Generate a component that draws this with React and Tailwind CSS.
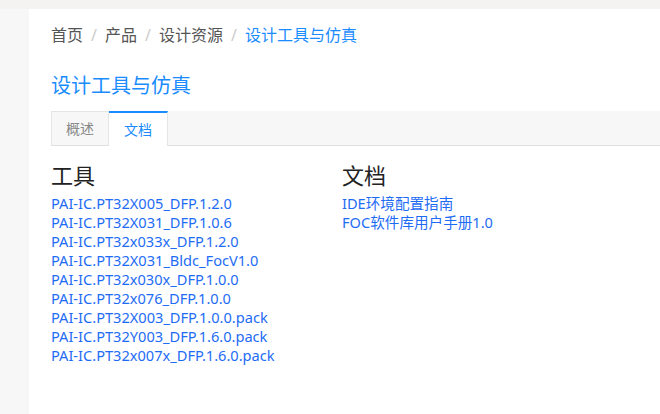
export default function App() {
  const tools = [
    "PAI-IC.PT32X005_DFP.1.2.0",
    "PAI-IC.PT32X031_DFP.1.0.6",
    "PAI-IC.PT32x033x_DFP.1.2.0",
    "PAI-IC.PT32X031_Bldc_FocV1.0",
    "PAI-IC.PT32x030x_DFP.1.0.0",
    "PAI-IC.PT32x076_DFP.1.0.0",
    "PAI-IC.PT32X003_DFP.1.0.0.pack",
    "PAI-IC.PT32Y003_DFP.1.6.0.pack",
    "PAI-IC.PT32x007x_DFP.1.6.0.pack",
  ];
  const docs = ["IDE环境配置指南", "FOC软件库用户手册1.0"];
  return (
    <div
      className="w-[660px] h-[414px] overflow-hidden bg-[#f5f3f2] pt-[9px]"
      style={{ fontFamily: '"Noto Sans", "Noto Sans CJK SC", sans-serif' }}
    >
      <div className="flex h-full">
        <div className="w-[29px] bg-[#f7f7f7] shrink-0" />
        <div className="flex-1 bg-white pl-[22px]">
          <div className="flex items-center h-[51px] text-[16px] text-[#555] gap-[8px]">
            <span>首页</span>
            <span className="text-[#ccc]">/</span>
            <span>产品</span>
            <span className="text-[#ccc]">/</span>
            <span>设计资源</span>
            <span className="text-[#ccc]">/</span>
            <span className="text-[#1a8cff]">设计工具与仿真</span>
          </div>
          <div className="text-[20px] text-[#1a8cff] leading-[28px] mt-[12px]">设计工具与仿真</div>
          <div className="flex mt-[11px] h-[35px] bg-[#f7f7f7] border-b border-[#e0e0e0]">
            <div className="w-[58px] flex items-center justify-center text-[14px] text-[#888] border border-[#e5e5e5] border-b-0">
              概述
            </div>
            <div className="w-[59px] flex items-center justify-center text-[14px] text-[#1a8cff] bg-white border-t-2 border-t-[#1a8cff] border-r border-r-[#e5e5e5] -mb-px">
              文档
            </div>
          </div>
          <div className="flex mt-[14px]">
            <div className="w-[291px]">
              <div className="text-[22px] text-[#222] leading-[30px]">工具</div>
              <div className="flex flex-col text-[14.6px] leading-[19px] text-[#1e6cf5] mt-[4px]">
                {tools.map((t) => (
                  <a key={t}>{t}</a>
                ))}
              </div>
            </div>
            <div>
              <div className="text-[22px] text-[#222] leading-[30px]">文档</div>
              <div className="flex flex-col text-[14.6px] leading-[19px] text-[#1e6cf5] mt-[4px]">
                {docs.map((t) => (
                  <a key={t}>{t}</a>
                ))}
              </div>
            </div>
          </div>
        </div>
      </div>
    </div>
  );
}
